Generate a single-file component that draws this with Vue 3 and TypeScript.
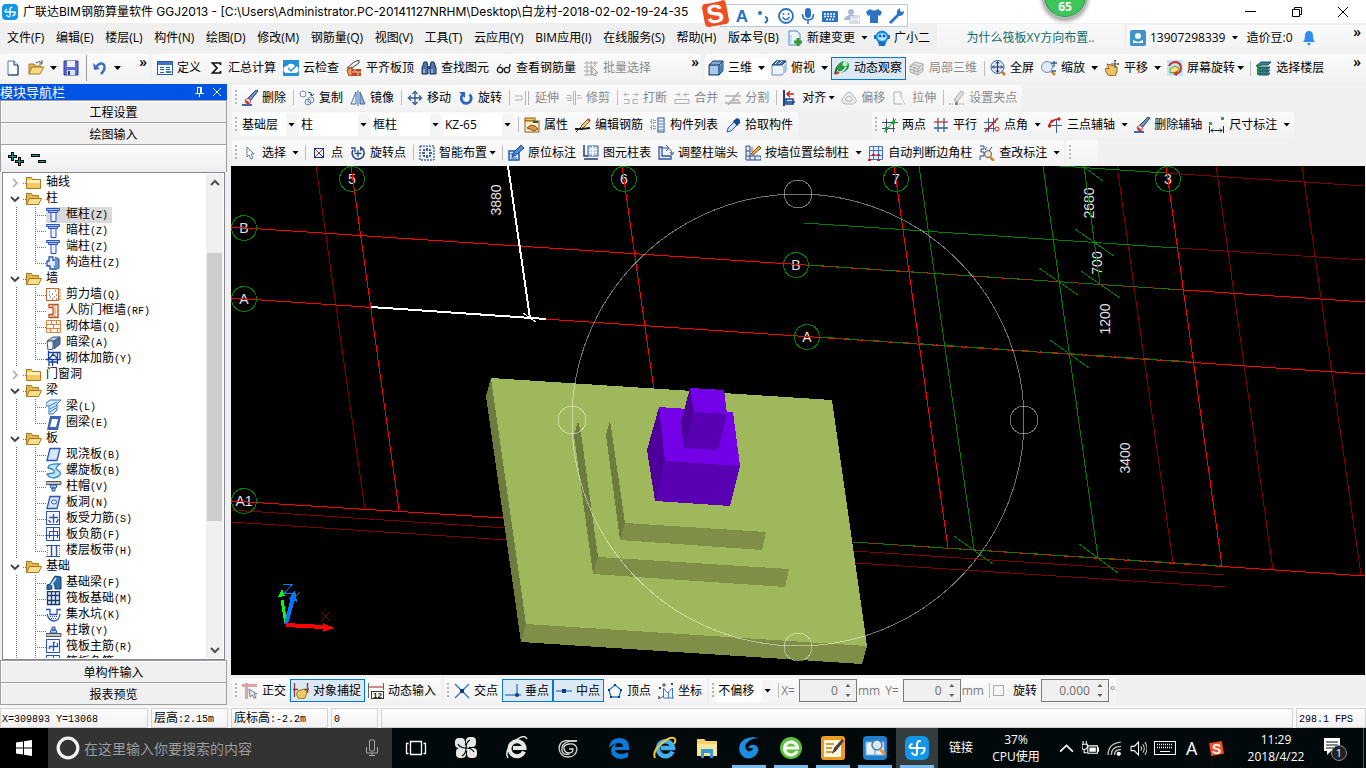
<script setup lang="ts">
import { ref } from 'vue'

interface Tool {
  icon?: string
  label?: string
  arrow?: 'split' | 'menu'
  off?: boolean
  on?: boolean
  sep?: boolean
}

const sep: Tool = { sep: true }

const icons: Record<string, string> = {
  app: '<rect width="16" height="16" rx="4" fill="#1296ea"/><path d="M8 12.500V5q.5-2 2.500-1.500M8 12.500q-2 1-3.500-1.500M3 8h10q.5 3-2.500 4M3 8q0-2 2-3" fill="none" stroke="#fff" stroke-width="1.300"/>',
  newfile: '<path d="M3 1h6l4 4v10H3z" fill="#fdfdff" stroke="#5b7aa5"/><path d="M9 1v4h4" fill="#dfe8f5" stroke="#223a60"/><path d="M13 5v10H3" fill="none" stroke="#223a60"/>',
  open: '<path d="M1 14V4h5l1 2h6v3" fill="#e3b553" stroke="#a87a24"/><path d="M1 14l3-7h12l-4 7z" fill="#f8d984" stroke="#a87a24"/><path d="M8 3q3-3 6 0M14 0v4h-3" fill="none" stroke="#555"/>',
  save: '<path d="M1 1h14v14H1z" fill="#5b6bd0" stroke="#263a94"/><rect x="4" y="1" width="8" height="6" fill="#eef0ff"/><rect x="4" y="10" width="8" height="5" fill="#dfe2f5"/><rect x="5" y="11" width="2" height="4" fill="#263a94"/>',
  undo: '<path d="M4 7q5-6 8-2 2 4-3 9" fill="none" stroke="#3c6fc4" stroke-width="2.500"/><path d="M1 3l1 7 6-1z" fill="#3c6fc4"/>',
  define: '<rect x=".5" y="1.500" width="15" height="13" fill="#f5f9ff" stroke="#2c5aa0"/><rect x="1" y="2" width="14" height="3" fill="#3f74c8"/><path d="M3 7.500h4M3 9.500h4M3 12.500h4M9 7.500h4M9 9.500h4" stroke="#2c5aa0"/><rect x="9" y="11" width="5" height="2" fill="#3f74c8"/>',
  sum: '<path d="M12.500 5V3H4.500l4.500 5-4.500 5h8v-2" fill="none" stroke="#111" stroke-width="1.700"/>',
  cloud: '<rect width="16" height="16" fill="#2590d8"/><path d="M4 13a3.500 3.500 0 0 1 0-7 4.500 4 0 0 1 8 0 3.500 3.500 0 0 1 0 7z" fill="#fff"/><path d="M5 8l3 3 5-5" fill="none" stroke="#2590d8" stroke-width="1.500"/>',
  slabtop: '<path d="M1 8l7-6 5-2v3l-7 5z" fill="#eee" stroke="#444"/><path d="M1 10l5-3v9H3z" fill="#f3a55b" stroke="#9a3a10"/><path d="M6 9h9v7H6z" fill="#b9462b"/><path d="M6 12h9M9 9v3M12 12v4" stroke="#f3c79d"/>',
  find: '<path d="M3 2h3l1 6v6H1V8zM10 2h3l2 6v6H9V8z" fill="#5273a8" stroke="#16305e"/><path d="M6 6h4v3H6z" fill="#2d4c80"/><path d="M3 9v4M11 9v4" stroke="#cfdcf2"/>',
  glasses: '<circle cx="4" cy="10" r="2.700" fill="none" stroke="#222" stroke-width="1.300"/><circle cx="11" cy="10" r="2.700" fill="none" stroke="#222" stroke-width="1.300"/><path d="M7 9h1M2 8l3-4M13 8l1-4v3" stroke="#222" fill="none"/>',
  batch: '<path d="M1 3h14M1 7h9M1 11h8M1 15h8M4 1v14M8 1v14M12 1v6" stroke="#aaa"/><path d="M9 7l6 6h-3l1 3-2 0-1-2-1 1z" fill="#eee" stroke="#999"/>',
  cube: '<path d="M1 5l4-4h10v10l-4 4H1z" fill="#7fa9d8" stroke="#143a66"/><path d="M1 5h10v10M11 5l4-4" fill="none" stroke="#143a66"/><path d="M2 6h8v8H2z" fill="#a9c9ea"/><path d="M12 6l3-3v8l-3 3z" fill="#4d7db3"/>',
  topview: '<path d="M1 5l4-4h10v10l-4 4H1z" fill="#eaf2fb" stroke="#6c8fb8"/><path d="M1 5l4-4h10l-4 4z" fill="#4d7db3" stroke="#143a66"/><path d="M12 6l3-3v8l-3 3z" fill="#a9c9ea"/><path d="M4 4l3-3M8 4l3-3" stroke="#cfe2f7"/>',
  orbit: '<path d="M1 14q1-8 8-12" stroke="#1b6e34" stroke-width="2" fill="none"/><ellipse cx="9" cy="7" rx="6.500" ry="5" fill="#2d9a48" transform="rotate(-35 9 7)"/><path d="M3 12q6 1 9-5" stroke="#e8efe8" stroke-width="1.500" fill="none"/><circle cx="11" cy="4" r="2.500" fill="#bdf0bd"/><path d="M1 15l5-2-3-2z" fill="#c0392b"/>',
  local3d: '<path d="M1 6l5-4 8 2v7l-5 4-8-3z" fill="#e3e3e3" stroke="#aaa"/><path d="M1 6l8 3 5-5M9 9v6M5 7v7M3 4l8 3M1 9l8 3 5-4" fill="none" stroke="#aaa"/>',
  full: '<circle cx="7.500" cy="7" r="6.500" fill="#dbe9fa" stroke="#3a5f94"/><path d="M7.500 2v10M2.500 7h10M6 3.500l1.500-2 1.500 2M6 10.500l1.500 2 1.500-2M4 5.500L2.500 7 4 8.500M11 5.500L12.500 7 11 8.500" fill="none" stroke="#16305e"/><path d="M12 12l3 3" stroke="#c07c2c" stroke-width="2.500"/>',
  zoom: '<circle cx="6" cy="7" r="5.500" fill="#dceafa" stroke="#6f8db5"/><path d="M10 11l4 4" stroke="#c88a3a" stroke-width="2.500"/><path d="M13 1v6M10 3h6M11 11h4" stroke="#2c5aa0" stroke-width="1.300" fill="none"/>',
  pan: '<path d="M4 15q-4-5-2-7l3 1-2-5 4 1 3 1 3 1v5l-2 4z" fill="#edc36a" stroke="#946015"/><path d="M11 0v8M7 4h8M10 1l1-1 1 1M14 3l1 1-1 1" stroke="#444" fill="none"/>',
  rotview: '<rect width="16" height="16" fill="#bfe6f8"/><path d="M2 6q2-4 7-4 5 1 5 6t-6 6" stroke="#d22f27" stroke-width="2" fill="none"/><path d="M3 9l5-3 4 2-2 4-7 1z" fill="#f7e27a" stroke="#5a9b37"/><path d="M6 14l4-3v5z" fill="#d22f27"/>',
  floors: '<path d="M0 6l5-4h10l-3 3H6zM3 7h11l-2 2H3zM3 10h11l-2 2H3zM3 13h11l-2 2H3z" fill="#3b7e9c" stroke="#155"/><path d="M2 4v11" stroke="#1c9140" stroke-width="2"/>',
  erase: '<path d="M0 15h10" stroke="#446a9c" stroke-width="2"/><path d="M5 9l9-9 2 1-8 10z" fill="#6e95c7" stroke="#24426b"/><path d="M3 10l3-2 3 3-2 3-3-1z" fill="#f6e3e3" stroke="#a4535e"/><path d="M4 11l3 3" stroke="#c33" stroke-width="2"/>',
  copy: '<circle cx="4" cy="4" r="3" fill="none" stroke="#6f89b0"/><circle cx="9" cy="12" r="3" fill="#dfe7f2" stroke="#6f89b0"/><circle cx="12" cy="10" r="3" fill="none" stroke="#6f89b0"/><path d="M9 2q4 0 4 4M11 4l2 2 2-2" fill="none" stroke="#2c4c80"/>',
  mirror: '<path d="M6 2v12H1z" fill="#eef4fc" stroke="#3e66a6"/><path d="M10 2v12h5z" fill="#8fb2e0" stroke="#3e66a6"/><path d="M8 0v16" stroke="#3e66a6"/>',
  move: '<path d="M8 3v10M3 8h10" stroke="#2f568e" stroke-width="1.300"/><path d="M5.500 4L8 1.500 10.500 4M5.500 12L8 14.500 10.500 12M4 5.500L1.500 8 4 10.500M12 5.500L14.500 8 12 10.500" fill="none" stroke="#2f568e" stroke-width="1.300"/>',
  rotate: '<path d="M4.500 5a5 5 0 1 0 7-.5" fill="none" stroke="#2f62c4" stroke-width="2.800"/><path d="M1 2h6v6z" fill="#2f62c4"/>',
  extend: '<path d="M0 6h7v4H0M10.500 1v14M13.500 1v14" fill="none" stroke="#b5b5b5"/>',
  trim: '<path d="M0 8h5M11 8h5M1 5.500h4v5H1M7.500 1v14M9.500 1v14M11 5.500h4" fill="none" stroke="#b5b5b5"/>',
  brk: '<path d="M1 9.500h5v4H1M15 9.500h-5v4h5M1 4.500h5M10 4.500h5M3 2.500l-2 2 2 2M13 2.500l2 2-2 2" fill="none" stroke="#b0b0b0"/>',
  merge: '<path d="M1 9.500h14v4H1zM1 4.500h5M10 4.500h5M4 2.500l2 2-2 2M12 2.500l-2 2 2 2" fill="none" stroke="#b0b0b0"/>',
  split: '<path d="M0 6h16M0 13h16M3 15L14 2M9 13v-3h4v3" fill="none" stroke="#b0b0b0" stroke-width="1.300"/>',
  align: '<path d="M2 0v16" stroke="#1b3f86" stroke-width="2"/><path d="M4 9h7v5H4zM5 12h8" fill="#dbe8fa" stroke="#1b3f86" stroke-width="1.500"/><path d="M12 4H6M8 1L5 4l3 3" stroke="#c8201c" stroke-width="1.500" fill="none"/>',
  offset: '<path d="M4 14q-5-2-2-6l4-5q2-2 4 0l4 5q3 4-2 6z" fill="#eee" stroke="#b5b5b5"/><path d="M5 11q-1-2 1-4 2-2 4 0 2 2 1 4z" fill="none" stroke="#b5b5b5"/>',
  stretch: '<path d="M9 2H2v12h7M9 2v5" fill="none" stroke="#b0b0b0"/><path d="M8 5l5 9H9" stroke="#bbb" fill="none" stroke-dasharray="2 1"/>',
  grips: '<path d="M0 14h4M10 14h6" stroke="#999" stroke-dasharray="2 1"/><rect x="6" y="12" width="3" height="3" fill="#888"/><path d="M5 10l7-9 3 2-7 9z" fill="#ddd" stroke="#aaa"/>',
  prop: '<rect x="1" y="1" width="10" height="3" fill="#f1c66a" stroke="#8c6117"/><rect x="1" y="4" width="14" height="11" fill="#fbeec8" stroke="#8c6117"/><path d="M3 11l4-3 4 1 3 3-4 2-4-2z" fill="#e09a35" stroke="#744"/><path d="M9 5h5" stroke="#355" stroke-width="2"/>',
  editbar: '<path d="M0 12h6l9-1" stroke="#222" stroke-width="1.800" fill="none"/><path d="M6 9L13 2l2 2-7 7z" fill="#f0cf74" stroke="#7c5a1c"/><path d="M13 2l2 2" stroke="#c33" stroke-width="2"/><path d="M1 15l5-5" stroke="#222"/>',
  complist: '<rect x="8" y="1" width="6" height="14" fill="#fff" stroke="#1f4a8f"/><path d="M9 4h4M9 7h4M9 10h4M9 13h4" stroke="#3f74c8"/><path d="M1 3h4v3H1zM1 9h4v3H1z" fill="none" stroke="#1f4a8f" stroke-dasharray="1 1"/>',
  pick: '<path d="M2 15l1-4 6-6 3 3-6 6z" fill="#cfe5fb" stroke="#2c5aa0"/><path d="M8 4l4 5 3-3q1-4-3-5z" fill="#174a93"/>',
  twopt: '<path d="M0 5.500h16M0 11.500h13M4.500 2v14M11.500 1v14" stroke="#3a4f5f"/><path d="M2 15L14 2" stroke="#1c8c3c"/><rect x="3" y="10" width="3" height="3" fill="#1a3"/><rect x="10" y="4" width="3" height="3" fill="#1a3"/>',
  parallel: '<path d="M5 1v14M11 1v14M1 11h14" stroke="#3a5f94" stroke-width="1.300"/><path d="M1 5h14" stroke="#c0392b" stroke-width="1.300"/>',
  ptangle: '<path d="M0 5.500h12M0 11.500h12M4.500 1v14M9.500 1v14" stroke="#3a5f94"/><path d="M1 15L14 1" stroke="#c8201c" stroke-width="1.500"/><circle cx="13" cy="12" r="2" fill="#fff" stroke="#c8201c"/>',
  arc3: '<path d="M2 9q1-6 10-7" stroke="#c8201c" stroke-width="1.500" fill="none"/><path d="M2 8.500h13M9.500 3v13" stroke="#3a5f94"/><circle cx="2.500" cy="9" r="1.700" fill="#c8201c"/><circle cx="12" cy="2" r="1.700" fill="#c8201c"/><circle cx="5" cy="4" r="1.500" fill="#c8201c"/>',
  dim: '<path d="M.5 9v7M14.500 9v7M2 13.500h11M4 11.500l-2 2 2 2M11 11.500l2 2-2 2" fill="none" stroke="#222"/><rect x="0" y="5" width="3" height="3" fill="#39a04a"/><rect x="12" y="0" width="3" height="3" fill="#39a04a"/>',
  cursor: '<path d="M5 2v10l2-2 2 4 2-1-2-4h3z" fill="#fff" stroke="#6a7890"/>',
  point: '<rect x="3.500" y="3.500" width="9" height="9" fill="#eef3fb" stroke="#1b2f7a"/><path d="M4 4l8 8M12 4l-8 8" stroke="#a33"/><path d="M8 8l4 4" stroke="#1b2f7a"/>',
  rotpoint: '<path d="M3 5a6 6 0 1 0 9-1.500" fill="none" stroke="#2b4a80" stroke-width="1.600"/><path d="M8 5v7M4.500 8.500h7M1 3h4v4" stroke="#2b4a80" stroke-width="1.300" fill="none"/><path d="M10 1v5l4-2z" fill="#2b4a80"/>',
  smart: '<rect x="1" y="1" width="14" height="14" fill="#e9f1fb" stroke="#16305e" stroke-dasharray="2 1"/><path d="M8 3v3M8 10v3M3 8h3M10 8h3M5 6V5h1M10 5h1v1M5 10v1h1M11 10v1h-1" stroke="#16305e" stroke-width="1.500" fill="none"/>',
  insitu: '<path d="M1 6h10v9H1z" fill="#dbe8fa" stroke="#1b5aa8" stroke-width="1.500"/><path d="M4 12l1-4 8-8 3 3-8 7z" fill="#4d8fd8" stroke="#174a93"/><path d="M2 9h5M3 13h6" stroke="#1b5aa8"/>',
  coltable: '<rect x="5" y="1" width="10" height="10" fill="#c6d8f2" stroke="#3e5f94"/><path d="M6 4.500h8M6 7.500h8M9.500 1v10" stroke="#fff"/><path d="M1 0v11h4M1 14h14" stroke="#1f3f86" stroke-width="1.500" fill="none"/>',
  colend: '<path d="M1 2h3v9h9v3H1z" fill="#e3edf9" stroke="#34569a" stroke-width="1.300"/><path d="M4 3h5q5 1 5 6M8 0l3 3-3 3M12 7l2 3 2-3" fill="none" stroke="#34569a"/>',
  bywall: '<path d="M1 1h4v14H1zM1 6h4M1 11h4M5 11h11v4H5M10 11v4" fill="#dfe9f7" stroke="#2d4d84"/><path d="M6 9L14 1l2 2-8 7z" fill="#eab54a" stroke="#6b4c16"/><path d="M7 2v5" stroke="#c33"/>',
  autocol: '<path d="M1.500 1.500h13v13h-13zM1 5.500h14M1 10.500h14M5.500 1v14M10.500 1v14" fill="#e6effb" stroke="#3f74c8"/><path d="M0 14h3v2H0zM9 14h3v2H9zM9 9h3v2H9zM4 9h3v2H4z" fill="#d22"/>',
  check: '<path d="M1 1h4v3H2v3h3v4H1v4M8 2L6 5M13 2l-4 5" fill="none" stroke="#1f4a8f"/><circle cx="9" cy="9" r="3.500" fill="#f3ead2" stroke="#555"/><path d="M11 12l4 4" stroke="#c88a3a" stroke-width="2.500"/>',
  ortho: '<path d="M0 2.500h15M4.500 0v16" stroke="#dca4a4" stroke-width="3"/><path d="M7 6l8 5-3 0 2 4-2 0-2-3-2 2z" fill="#dfe6ee" stroke="#72808f"/>',
  snap: '<path d="M1.500 0v14M14.500 0v10M0 6.500h5M11 6.500h5" stroke="#863b3b" stroke-width="1.300"/><path d="M5 15q-3-4 0-7l6-2 3 3-2 6-5 1z" fill="#f0cb63" stroke="#9a7320"/>',
  dynin: '<path d="M0 4h16" stroke="#c98b8b" stroke-width="2"/><path d="M.5 0v15M15.500 0v7" stroke="#666"/><rect x="3.500" y="8.500" width="12" height="7" fill="#fff" stroke="#333"/><text x="5" y="15" font-size="8" font-weight="700" font-family="Liberation Sans" fill="#111">12</text>',
  cross: '<path d="M1 1l14 14M15 1L1 15" stroke="#2a78c8" stroke-width="1.400"/><rect x="6" y="6" width="4" height="4" fill="#0d3c86"/>',
  perp: '<path d="M0 12h16M12 1v11" stroke="#4a86c8" stroke-width="1.500"/><circle cx="12" cy="12" r="2" fill="#0d3c86"/>',
  mid: '<path d="M0 8h16" stroke="#4a86c8" stroke-width="1.500"/><rect x="6" y="6" width="4" height="4" fill="#0d3c86"/>',
  vertex: '<path d="M8 2l6 5-2 7H4L2 7z" fill="none" stroke="#2a78c8" stroke-width="1.300"/><path d="M7 1h2v2H7zM1 6h2v2H1zM13 6h2v2h-2zM3 13h2v2H3zM11 13h2v2h-2z" fill="#0d3c86"/>',
  coord: '<path d="M5.500 5v10H16M5.500 5l4 5 5-5M10.500 9v6M14.500 5v10M3 15l3-3" fill="none" stroke="#3f74c8"/><path d="M1 4l2 2M3 4l-2 2M13 0l2 2M15 0l-2 2M5 1h2v2H5zM0 14h2v2H0z" stroke="#444" fill="none"/>',
  newchange: '<path d="M2 1h8l3 3v11H2z" fill="#eef7ff" stroke="#3b8fc0"/><path d="M4 5v8" stroke="#9bc6e3"/><path d="M11 8v8M7 12h8" stroke="#2f9a2f" stroke-width="3"/>',
  mascot: '<circle cx="8" cy="7" r="6.500" fill="#2288d8"/><ellipse cx="8" cy="7" rx="5" ry="4" fill="#7fd0ff"/><circle cx="6" cy="6" r="1" fill="#124"/><circle cx="10" cy="6" r="1" fill="#124"/><path d="M5 8q3 3 6 0" stroke="#fff" fill="none"/><path d="M4 12h8l-1 4H5z" fill="#1b6fc0"/><path d="M0 5h2v4H0zM14 5h2v4h-2z" fill="#1b6fc0"/>',
  user: '<rect width="16" height="16" rx="2" fill="#3f93cc"/><circle cx="8" cy="6" r="3" fill="#fff"/><path d="M3 13v-3l5 2 5-2v3z" fill="#fff"/>',
  bell: '<path d="M2 12q2-2 2-6 0-5 4-5t4 5q0 4 2 6z" fill="#2f8ef0"/><path d="M6 13h4l-2 3z" fill="#2f8ef0"/>',
  folder: '<path d="M.5 13.500v-11h5l1 2h8v9z" fill="#f3c95f" stroke="#a9781d"/><path d="M1 5h13v3H1z" fill="#fdf0bf"/>',
  folderopen: '<path d="M.5 13.500v-11h5l1 2h6v3" fill="#e5b64b" stroke="#a9781d"/><path d="M.5 13.500l3-6h12l-3 6z" fill="#fbdf8f" stroke="#a9781d"/>',
  column: '<path d="M.5 1.500h13v2H.5zM2.500 3.500h9v2h-9z" fill="#a9c6f2" stroke="#2853c4"/><path d="M5 5.500h5v9H5z" fill="#e9f2fd" stroke="#2853c4"/>',
  tiecol: '<path d="M3 2h4v3h3v2h2v4H9v3H4v-3H1V6h2z" fill="#dce8fb" stroke="#2853a8" stroke-width="1.300"/><path d="M9 2l4 2v9l-4 2" fill="#6d94cf" stroke="#2853a8"/>',
  shear: '<rect x=".5" y="1.500" width="12" height="12" fill="#fff" stroke="#c8622a"/><path d="M3 5h1M6 7h1M9 4h1M4 10h1M8 10h1M10 8h1M6 12h1M10 12h1M3 8h1" stroke="#333"/><path d="M14 2v12" stroke="#c8622a" stroke-dasharray="2 1"/>',
  airwall: '<path d="M3 1.500h9v13H3v-3h4v-7H3z" fill="#fff0e2" stroke="#b8501a" stroke-width="1.300"/><path d="M9 5v6M5 3h5M5 13h5" stroke="#d88447"/>',
  brick: '<path d="M.5 1.500h14v12H.5zM1 5.500h13M1 9.500h13M5.500 2v3M10.500 2v3M7.500 6v3M4.500 10v3M11.500 10v3" fill="#fff5ea" stroke="#d88447"/>',
  beam: '<path d="M1 6l6-4h7l-6 4z" fill="#c3d3e8" stroke="#39506f"/><path d="M1 6h6v8l-5 1z" fill="#eef3fa" stroke="#39506f"/><path d="M8 6l6-4v7l-6 5z" fill="#4f74a5" stroke="#39506f"/>',
  wallbar: '<path d="M2 1.500h12v6M0 8.500h15M2.500 0v10M6.500 8v7M11.500 1v12M3 15v-4h8M3 8l4-5 5 5" fill="none" stroke="#153f9c" stroke-width="1.300"/>',
  beaml: '<path d="M0 4l4-3h11l-4 4v6l-4 4H3V7H0z" fill="#d8ebfa" stroke="#2f77b8"/><path d="M3 7l8-4M4 10l7-4M4 13l6-4" stroke="#2f77b8"/>',
  ring: '<path d="M4 1h11l-3 14H1z" fill="#3a62bd"/><path d="M6 4h6l-2 8H4z" fill="#fff"/>',
  slab: '<path d="M4 1.500h10l-3 12H1z" fill="#d7e6fb" stroke="#2853c4" stroke-width="1.300"/>',
  spiral: '<path d="M14 1q-12-1-12 4 8 2 6 5l-7 1q2 4 7 4 8-2 6-6-2-2-4-3 0-2 4-5z" fill="#bfe3f7" stroke="#2f86c0" stroke-width="1.300"/>',
  cap: '<path d="M0 2.500h15v3H0z" fill="#c4c4c4" stroke="#555"/><path d="M4 6h7l-1 3H5zM6 9h3v3H6z" fill="#b6d0f4" stroke="#2853a8"/>',
  hole: '<path d="M4 1.500h10l-3 12H1z" fill="#d7e6fb" stroke="#2853c4" stroke-width="1.300"/><ellipse cx="8" cy="7" rx="2.500" ry="2" fill="#fff" stroke="#2853c4"/>',
  barS: '<rect x=".5" y=".5" width="13" height="13" fill="#f3f8ff" stroke="#2853c4"/><path d="M3 6.500h9M7.500 3v9M5 11q-2 0-2-2M10 11q2 0 2-3" fill="none" stroke="#2853a8" stroke-width="1.300"/>',
  barF: '<rect x=".5" y=".5" width="13" height="13" fill="#f3f8ff" stroke="#2853c4"/><path d="M3.500 4v7M11.500 4v7M3 4.500h9M1 8.500h13M7.500 1v13" fill="none" stroke="#2853a8"/>',
  strip: '<path d="M0 2.500h14M0 13.500h14" stroke="#2853a8"/><path d="M5.500 3v10M10.500 3v10" stroke="#2853a8" stroke-width="1.500"/><path d="M1.500 3v10M13.500 3v10" stroke="#888" stroke-dasharray="1 1"/>',
  fbeam: '<path d="M1 14.500V10l3-1 5-8 6 1v12H9v-4H6v4z" fill="#2e6da8" stroke="#123c6b"/><path d="M5 10l5-7M7 13V9" stroke="#d7e9f8" stroke-width="1.500"/>',
  raft: '<path d="M1.500 .5h12v13h-12zM1 4.500h13M1 9.500h13M5.500 1v13M9.500 1v13" fill="#e3eefa" stroke="#173e74" stroke-width="1.300"/>',
  pit: '<path d="M0 2.500h4v5h7v-5h4M1 7q2 7 7 7t6-7" fill="none" stroke="#2853c4" stroke-width="1.300"/><path d="M4 9.500h8M5 11.500h6" stroke="#2853c4" stroke-dasharray="1 1"/>',
  pier: '<path d="M0 10.500h15v3H0z" fill="#c4c4c4" stroke="#555"/><path d="M4 10h7l-1-3H5zM6 7h3V4H6z" fill="#b6d0f4" stroke="#2853a8"/>',
  barR: '<rect x=".5" y=".5" width="13" height="13" fill="#f3f8ff" stroke="#2853c4"/><path d="M3 7.500h9M7.500 3v9M3.500 7v3M11.500 4v4M7 3.500h2" fill="none" stroke="#2853c4" stroke-width="1.300"/>',
}

const menus = ['文件(F)', '编辑(E)', '楼层(L)', '构件(N)', '绘图(D)', '修改(M)', '钢筋量(Q)', '视图(V)', '工具(T)', '云应用(Y)', 'BIM应用(I)', '在线服务(S)', '帮助(H)', '版本号(B)']

const fileTools: Tool[] = [{ icon: 'newfile' }, { icon: 'open', arrow: 'split' }, { icon: 'save' }, sep, { icon: 'undo', arrow: 'split' }]
const calcTools: Tool[] = [
  { icon: 'define', label: '定义' }, { icon: 'sum', label: '汇总计算' }, { icon: 'cloud', label: '云检查' },
  { icon: 'slabtop', label: '平齐板顶' }, { icon: 'find', label: '查找图元' }, { icon: 'glasses', label: '查看钢筋量' },
  { icon: 'batch', label: '批量选择', off: true },
]
const viewTools: Tool[] = [
  { icon: 'cube', label: '三维', arrow: 'split' }, { icon: 'topview', label: '俯视', arrow: 'split' },
  { icon: 'orbit', label: '动态观察', on: true }, { icon: 'local3d', label: '局部三维', off: true }, sep,
  { icon: 'full', label: '全屏' }, { icon: 'zoom', label: '缩放', arrow: 'split' }, { icon: 'pan', label: '平移', arrow: 'split' },
  { icon: 'rotview', label: '屏幕旋转', arrow: 'menu' }, sep, { icon: 'floors', label: '选择楼层' },
]
const editTools: Tool[] = [
  { icon: 'erase', label: '删除' }, sep, { icon: 'copy', label: '复制' }, { icon: 'mirror', label: '镜像' }, sep,
  { icon: 'move', label: '移动' }, { icon: 'rotate', label: '旋转' }, sep,
  { icon: 'extend', label: '延伸', off: true }, { icon: 'trim', label: '修剪', off: true }, sep,
  { icon: 'brk', label: '打断', off: true }, { icon: 'merge', label: '合并', off: true }, { icon: 'split', label: '分割', off: true }, sep,
  { icon: 'align', label: '对齐', arrow: 'menu' }, { icon: 'offset', label: '偏移', off: true }, { icon: 'stretch', label: '拉伸', off: true }, sep,
  { icon: 'grips', label: '设置夹点', off: true },
]
const compTools: Tool[] = [
  sep, { icon: 'prop', label: '属性' }, { icon: 'editbar', label: '编辑钢筋' },
  { icon: 'complist', label: '构件列表' }, { icon: 'pick', label: '拾取构件' },
]
const axisTools: Tool[] = [
  { icon: 'twopt', label: '两点' }, { icon: 'parallel', label: '平行' }, { icon: 'ptangle', label: '点角', arrow: 'split' },
  { icon: 'arc3', label: '三点辅轴', arrow: 'split' }, { icon: 'erase', label: '删除辅轴' }, { icon: 'dim', label: '尺寸标注', arrow: 'split' },
]
const drawTools: Tool[] = [
  { icon: 'cursor', label: '选择', arrow: 'split' }, sep, { icon: 'point', label: '点' }, { icon: 'rotpoint', label: '旋转点' }, sep,
  { icon: 'smart', label: '智能布置', arrow: 'menu' }, sep, { icon: 'insitu', label: '原位标注' }, { icon: 'coltable', label: '图元柱表' },
  { icon: 'colend', label: '调整柱端头' }, { icon: 'bywall', label: '按墙位置绘制柱', arrow: 'split' },
  { icon: 'autocol', label: '自动判断边角柱' }, { icon: 'check', label: '查改标注', arrow: 'split' },
]
const modeTools: Tool[] = [{ icon: 'ortho', label: '正交' }, { icon: 'snap', label: '对象捕捉', on: true }, { icon: 'dynin', label: '动态输入' }]
const snapTools: Tool[] = [
  { icon: 'cross', label: '交点' }, { icon: 'perp', label: '垂点', on: true }, { icon: 'mid', label: '中点', on: true },
  { icon: 'vertex', label: '顶点' }, { icon: 'coord', label: '坐标' },
]

const combos = [
  { value: '基础层', name: '楼层', short: true }, { value: '柱', name: '构件类型', short: false },
  { value: '框柱', name: '构件子类', short: false }, { value: 'KZ-65', name: '构件名称', short: false },
]

interface Node { icon: string; label: string; key?: string; kind: 'closed' | 'open' | 'item'; last?: boolean; sel?: boolean }
const item = (icon: string, label: string, key: string, extra: Partial<Node> = {}): Node => ({ icon, label, key, kind: 'item', ...extra })
const open = (label: string): Node => ({ icon: 'folderopen', label, kind: 'open' })
const closed = (label: string): Node => ({ icon: 'folder', label, kind: 'closed' })
const tree: Node[] = [
  closed('轴线'), open('柱'),
  item('column', '框柱', '(Z)', { sel: true }), item('column', '暗柱', '(Z)'), item('column', '端柱', '(Z)'), item('tiecol', '构造柱', '(Z)', { last: true }),
  open('墙'), item('shear', '剪力墙', '(Q)'), item('airwall', '人防门框墙', '(RF)'), item('brick', '砌体墙', '(Q)'), item('beam', '暗梁', '(A)'), item('wallbar', '砌体加筋', '(Y)', { last: true }),
  closed('门窗洞'), open('梁'), item('beaml', '梁', '(L)'), item('ring', '圈梁', '(E)', { last: true }),
  open('板'), item('slab', '现浇板', '(B)'), item('spiral', '螺旋板', '(B)'), item('cap', '柱帽', '(V)'), item('hole', '板洞', '(N)'),
  item('barS', '板受力筋', '(S)'), item('barF', '板负筋', '(F)'), item('strip', '楼层板带', '(H)', { last: true }),
  open('基础'), item('fbeam', '基础梁', '(F)'), item('raft', '筏板基础', '(M)'), item('pit', '集水坑', '(K)'), item('pier', '柱墩', '(Y)'),
  item('barR', '筏板主筋', '(R)'), item('barF', '筏板负筋', '(X)'),
]

type Line = [number, number, number, number]
const dark: Line[] = [
  [316, 166, 365, 510], [1117, 166, 1173, 563], [1216, 166, 1273, 570], [1302, 166, 1361, 575],
  [231, 510, 506, 528], [231, 522, 507, 540], [853, 551, 1224, 575], [855, 563, 1226, 587],
  [1177, 248, 1365, 260], [1165, 173, 1365, 186],
]
const red: Line[] = [
  [351, 166, 399, 510], [622, 166, 654, 390], [894, 166, 948, 548], [1166, 166, 1222, 566],
  [231, 227, 1365, 302], [231, 298, 1365, 374], [231, 501, 504, 518], [853, 542, 1365, 576],
]
const green: Line[] = [
  [919, 166, 974, 550], [1043, 166, 1098, 558], [1084, 166, 1100, 284], [804, 223, 1177, 248], [1060, 166, 1165, 173],
  [1079, 163, 1103, 181], [1075, 229, 1114, 256], [1039, 268, 1078, 295], [1081, 271, 1120, 298],
  [1050, 340, 1089, 368], [1079, 544, 1118, 573], [954, 536, 993, 564],
]
const mixed: Line[] = [[809, 265, 1183, 290], [819, 337, 1194, 362], [853, 542, 1222, 566]]
const bubbles = [
  { x: 352, y: 179, t: '5' }, { x: 624, y: 179, t: '6' }, { x: 896, y: 179, t: '7' }, { x: 1168, y: 179, t: '3' },
  { x: 244, y: 228, t: 'B' }, { x: 244, y: 299, t: 'A' }, { x: 244, y: 501, t: 'A1' }, { x: 796, y: 265, t: 'B' }, { x: 807, y: 337, t: 'A' },
]
const dims = [
  { x: 496, y: 200, t: '3880' }, { x: 1089, y: 203, t: '2680' }, { x: 1097, y: 263, t: '700' },
  { x: 1105, y: 319, t: '1200' }, { x: 1125, y: 458, t: '3400' },
]
const handles = [[798, 194], [572, 420], [1024, 420], [798, 647]]
const faces = [
  { c: '#a0b85c', p: '491,378 832,400 867,646 526,624' },
  { c: '#6c7b3e', p: '491,378 486,396 521,642 526,624' },
  { c: '#7f8f47', p: '526,624 867,646 862,664 521,642' },
  { c: '#6c7b3e', p: '578,421 574,435 593,574 598,557 581,433' },
  { c: '#7f8f47', p: '598,557 789,569 785,587 593,574' },
  { c: '#6c7b3e', p: '610,420 606,435 620,540 625,523' },
  { c: '#7f8f47', p: '625,523 766,532 762,550 620,540' },
  { c: '#7300e6', p: '659,407 733,412 740,466 665,461' },
  { c: '#4c0099', p: '659,407 647,450 655,501 665,461' },
  { c: '#5a00b3', p: '665,461 740,466 730,506 655,501' },
  { c: '#7300e6', p: '690,388 724,390 727,414 694,412' },
  { c: '#4c0099', p: '690,388 681,422 684,448 694,412' },
  { c: '#5a00b3', p: '694,412 727,414 718,450 684,448' },
]

const offX = ref('0')
const offY = ref('0')
const angle = ref('0.000')
const rotated = ref(false)
</script>

<template>
  <div class="desk">
    <header class="title">
      <svg class="logo" viewBox="0 0 16 16" v-html="icons.app" />
      <h1>广联达BIM钢筋算量软件 GGJ2013 - [C:\Users\Administrator.PC-20141127NRHM\Desktop\白龙村-2018-02-02-19-24-35</h1>
      <div class="winbtns">
        <button aria-label="最小化"><svg viewBox="0 0 12 12"><path d="M0 5.500h11" stroke="#000" /></svg></button>
        <button aria-label="还原"><svg viewBox="0 0 12 12"><path d="M1.500 3.500h7v7h-7zM3.500 3v-1.500h7v7H9" fill="none" stroke="#000" /></svg></button>
        <button aria-label="关闭"><svg viewBox="0 0 12 12"><path d="M1 1l10 10M11 1L1 11" stroke="#000" /></svg></button>
      </div>
      <div class="ball">65</div>
      <div class="ime">
        <svg class="sogou" viewBox="0 0 28 28"><path d="M3 4Q14 3 22 0q2 0 3 4l3 16q0 3-3 4L8 27q-3 0-4-3L1 8q0-3 2-4z" fill="#f04e23" /><text x="14" y="23" text-anchor="middle" font-size="26" font-weight="700" font-family="Liberation Sans" fill="#fff" transform="rotate(-8 14 14)">S</text></svg>
        <svg viewBox="0 0 16 16"><text x="8" y="14" text-anchor="middle" font-size="17" font-weight="700" font-family="Liberation Sans" fill="#2a72c4">A</text></svg>
        <svg viewBox="0 0 16 16"><circle cx="4" cy="5" r="2" fill="#2a72c4" /><path d="M9 9q3 0 2 4l-2 2" stroke="#2a72c4" stroke-width="2" fill="none" /></svg>
        <svg viewBox="0 0 16 16"><circle cx="8" cy="8" r="7" fill="none" stroke="#2a72c4" stroke-width="1.800" /><path d="M4.500 9q3.500 5 7 0" fill="none" stroke="#2a72c4" stroke-width="1.500" /><circle cx="5.500" cy="6" r="1" fill="#2a72c4" /><circle cx="10.500" cy="6" r="1" fill="#2a72c4" /></svg>
        <svg viewBox="0 0 16 16"><rect x="5" y="0" width="6" height="10" rx="3" fill="#2a72c4" /><path d="M2.500 6q0 6 5.500 6t5.500-6M8 12v4" fill="none" stroke="#2a72c4" stroke-width="1.600" /></svg>
        <svg viewBox="0 0 16 16"><rect x="0" y="3" width="16" height="11" rx="1" fill="#2a72c4" /><path d="M2 6h12M2 8.500h12M4 11.500h8" stroke="#fff" stroke-width="1.300" stroke-dasharray="2 1" /></svg>
        <svg viewBox="0 0 16 16"><circle cx="7" cy="4" r="3" fill="#a9bbd2" /><path d="M0 12q1-5 7-5t6 3v2z" fill="#a9bbd2" /><rect x="6" y="8" width="10" height="7" fill="#fff" stroke="#a9bbd2" /><path d="M8 10h6M8 13h6" stroke="#a9bbd2" /></svg>
        <svg viewBox="0 0 16 16"><path d="M4 1q4 3 8 0l4 3-2 4-2-1v8H4V7L2 8 0 4z" fill="#2a72c4" /></svg>
        <svg viewBox="0 0 16 16"><path d="M1 14l8-8q-1-4 3-6l0 3 2 1 2-1q0 5-5 5l-8 8z" fill="#2a72c4" /></svg>
      </div>
    </header>

    <div class="menurow">
      <nav class="menus"><button v-for="m in menus" :key="m">{{ m }}</button></nav>
      <div class="strip plain">
        <button class="tool"><svg viewBox="0 0 16 16" v-html="icons.newchange" /><span>新建变更</span><i class="arr split" /></button>
        <button class="tool"><svg viewBox="0 0 16 16" v-html="icons.mascot" /><span>广小二</span></button>
      </div>
      <a class="tip" href="#">为什么筏板XY方向布置..</a>
      <div class="strip account">
        <button class="tool"><svg viewBox="0 0 16 16" v-html="icons.user" /><span>13907298339</span><i class="arr split" /></button>
        <span class="beans">造价豆:0</span>
        <svg class="bell" viewBox="0 0 16 16" v-html="icons.bell" />
        <i class="more">»</i>
      </div>
    </div>

    <div class="toprow">
      <div class="strip files">
        <template v-for="(t, i) in fileTools" :key="i">
          <i v-if="t.sep" class="sep tall" />
          <button v-else class="tool" :aria-label="t.icon"><svg viewBox="0 0 16 16" v-html="icons[t.icon!]" /><i v-if="t.arrow" class="arr split" /></button>
        </template>
        <i class="more">»</i>
      </div>
      <div class="strip calc">
        <button v-for="t in calcTools" :key="t.label" class="tool" :class="{ off: t.off }"><svg viewBox="0 0 16 16" v-html="icons[t.icon!]" /><span>{{ t.label }}</span></button>
        <i class="more">»</i>
      </div>
      <div class="strip view">
        <template v-for="(t, i) in viewTools" :key="i">
          <i v-if="t.sep" class="sep" />
          <button v-else class="tool" :class="{ off: t.off, on: t.on, white: i === 0 }"><svg viewBox="0 0 16 16" v-html="icons[t.icon!]" /><span>{{ t.label }}</span><i v-if="t.arrow" class="arr" :class="t.arrow" /></button>
        </template>
        <i class="more">»</i>
      </div>
    </div>

    <main class="work">
      <aside class="nav">
        <div class="navhead">
          <h2>模块导航栏</h2>
          <svg viewBox="0 0 12 12"><path d="M4.500 1v6M8.500 1v6M4 1.500h5M2 7.500h9M6.500 7v4M7.500 1v6" stroke="#fff" fill="none" /></svg>
          <svg viewBox="0 0 12 12"><path d="M2 2l8 8M10 2l-8 8" stroke="#fff" /></svg>
        </div>
        <button class="section">工程设置</button>
        <button class="section">绘图输入</button>
        <div class="expanders">
          <svg viewBox="0 0 42 18"><path d="M8.500 3v9M4 7.500h9M15.500 8v9M11 12.500h9M27 6.500h9M34 12.500h9" stroke="#000" stroke-width="3" /><path d="M8.500 4v7M5 7.500h7M15.500 9v7M12 12.500h7M28 6.500h7M35 12.500h6" stroke="#00a0a0" /></svg>
        </div>
        <div class="treebox">
          <ul class="tree">
            <li v-for="(n, i) in tree" :key="i">
              <svg v-if="n.kind === 'item'" class="guide deep" viewBox="0 0 42 16"><path :d="'M12.500 0v16M31.500 0v' + (n.last ? 8 : 16) + 'M31 8.500h11'" stroke="#777" stroke-dasharray="1 1" fill="none" /></svg>
              <svg v-else class="guide" viewBox="0 0 22 16">
                <path v-if="n.kind === 'closed'" d="M9 4l4 4-4 4" stroke="#a6a6a6" stroke-width="1.500" fill="none" />
                <path v-else d="M7 6l4 4 4-4" stroke="#404040" stroke-width="1.800" fill="none" />
                <path d="M19 8.500h3" stroke="#777" stroke-dasharray="1 1" />
              </svg>
              <span class="leaf" :class="{ sel: n.sel }"><svg class="nodeicon" viewBox="0 0 16 16" v-html="icons[n.icon]" /><span class="name">{{ n.label }}<span class="mono">{{ n.key }}</span></span></span>
            </li>
          </ul>
          <div class="scroll">
            <button aria-label="向上"><svg viewBox="0 0 10 10"><path d="M1 7l4-4 4 4" stroke="#505050" stroke-width="2" fill="none" /></svg></button>
            <div class="track"><div class="thumb" /></div>
            <button aria-label="向下"><svg viewBox="0 0 10 10"><path d="M1 3l4 4 4-4" stroke="#505050" stroke-width="2" fill="none" /></svg></button>
          </div>
        </div>
        <button class="section">单构件输入</button>
        <button class="section">报表预览</button>
      </aside>

      <section class="stage">
        <div class="bar">
          <div class="strip">
            <i class="grip" />
            <template v-for="(t, i) in editTools" :key="i">
              <i v-if="t.sep" class="sep" />
              <button v-else class="tool" :class="{ off: t.off }"><svg viewBox="0 0 16 16" v-html="icons[t.icon!]" /><span>{{ t.label }}</span><i v-if="t.arrow" class="arr" :class="t.arrow" /></button>
            </template>
          </div>
        </div>
        <div class="bar">
          <div class="strip">
            <i class="grip" />
            <div class="combos">
              <label v-for="c in combos" :key="c.name" class="combo" :class="{ short: c.short }">
                <select :aria-label="c.name"><option>{{ c.value }}</option></select><span class="drop"><i class="arr" /></span>
              </label>
            </div>
            <template v-for="(t, i) in compTools" :key="i">
              <i v-if="t.sep" class="sep" />
              <button v-else class="tool"><svg viewBox="0 0 16 16" v-html="icons[t.icon!]" /><span>{{ t.label }}</span></button>
            </template>
          </div>
          <div class="strip apart">
            <i class="grip" />
            <button v-for="t in axisTools" :key="t.label" class="tool"><svg viewBox="0 0 16 16" v-html="icons[t.icon!]" /><span>{{ t.label }}</span><i v-if="t.arrow" class="arr split" /></button>
          </div>
        </div>
        <div class="bar last">
          <div class="strip">
            <i class="grip" />
            <template v-for="(t, i) in drawTools" :key="i">
              <i v-if="t.sep" class="sep" />
              <button v-else class="tool"><svg viewBox="0 0 16 16" v-html="icons[t.icon!]" /><span>{{ t.label }}</span><i v-if="t.arrow" class="arr" :class="t.arrow" /></button>
            </template>
          </div>
          <div class="strip empty"><i class="grip" /></div>
        </div>

        <div class="canvas">
          <svg viewBox="231 166 1135 509" preserveAspectRatio="xMinYMin slice">
            <g shape-rendering="crispEdges" fill="none">
              <text v-for="d in dims" :key="d.t" :transform="`translate(${d.x} ${d.y}) rotate(-90)`" y="5" class="dimtext">{{ d.t }}</text>
              <text v-for="b in bubbles" :key="'t' + b.x + b.y" :x="b.x" :y="b.y + 5" class="axistext">{{ b.t }}</text>
              <line v-for="(l, i) in dark" :key="'d' + i" :x1="l[0]" :y1="l[1]" :x2="l[2]" :y2="l[3]" stroke="#800000" />
              <line v-for="(l, i) in red" :key="'r' + i" :x1="l[0]" :y1="l[1]" :x2="l[2]" :y2="l[3]" stroke="#ff0000" />
              <line v-for="(l, i) in green" :key="'g' + i" :x1="l[0]" :y1="l[1]" :x2="l[2]" :y2="l[3]" stroke="#008000" />
              <line v-for="(l, i) in mixed" :key="'m' + i" :x1="l[0]" :y1="l[1]" :x2="l[2]" :y2="l[3]" stroke="#008000" stroke-dasharray="15 2 2 2 2 2" />
              <circle v-for="b in bubbles" :key="'c' + b.x + b.y" :cx="b.x" :cy="b.y" r="12.500" stroke="#008000" />
              <path d="M508 166L530 318M371 307L546 319" stroke="#fff" stroke-width="2" />
              <path d="M523 313l13 9" stroke="#fff" />
              <polygon v-for="(f, i) in faces" :key="'f' + i" :points="f.p" :fill="f.c" />
              <g stroke="#fff" stroke-opacity=".45">
                <circle cx="798" cy="420" r="226" />
                <circle v-for="(h, i) in handles" :key="'h' + i" :cx="h[0]" :cy="h[1]" r="14" />
              </g>
              <path d="M321 612l9 9M330 612l-9 9" stroke="#7a0f0f" />
              <path d="M300 592l-4 4" stroke="#00a000" />
              <path d="M283 584.500h9l-8 9h10" stroke="#0078ff" />
              <path d="M286 624L282 600" stroke="#00ff00" stroke-width="3" />
              <path d="M282 589l-4 8 7-1z" fill="#00ff00" />
              <path d="M286 624L293 598" stroke="#0078ff" stroke-width="4" />
              <path d="M295 590l-6 9 8 3z" fill="#0078ff" />
              <path d="M286 625L323 627" stroke="#ff0000" stroke-width="4" />
              <path d="M323 623l11 5-11 4z" fill="#ff0000" />
            </g>
          </svg>
        </div>

        <div class="bar bottom">
          <div class="strip">
            <i class="grip" />
            <button v-for="t in modeTools" :key="t.label" class="tool" :class="{ on: t.on }"><svg viewBox="0 0 16 16" v-html="icons[t.icon!]" /><span>{{ t.label }}</span></button>
          </div>
          <div class="strip snaps">
            <i class="grip" />
            <button v-for="t in snapTools" :key="t.label" class="tool" :class="{ on: t.on }"><svg viewBox="0 0 16 16" v-html="icons[t.icon!]" /><span>{{ t.label }}</span></button>
          </div>
          <div class="strip offsets">
            <i class="grip" />
            <label class="combo short"><select aria-label="偏移方式"><option>不偏移</option></select><span class="drop"><i class="arr" /></span></label>
            <i class="sep wide" />
            <label class="num" for="ox">X=</label>
            <span class="spin"><input id="ox" v-model="offX"><span class="ud"><i class="up" /><i class="arr" /></span></span>
            <span class="num unit">mm</span>
            <label class="num" for="oy">Y=</label>
            <span class="spin"><input id="oy" v-model="offY"><span class="ud"><i class="up" /><i class="arr" /></span></span>
            <span class="num unit">mm</span>
            <i class="sep tight" />
            <label class="rot"><input v-model="rotated" type="checkbox"><span>旋转</span></label>
            <span class="spin big"><input v-model="angle" aria-label="旋转角度"><span class="ud"><i class="up" /><i class="arr" /></span></span>
            <span class="num deg">°</span>
          </div>
        </div>
      </section>
    </main>

    <footer class="status">
      <span class="cell c1"><span class="mono">X=309893 Y=13068</span></span>
      <span class="cell c2">层高<span class="mono">:2.15m</span></span>
      <span class="cell c3">底标高<span class="mono">:-2.2m</span></span>
      <span class="cell c4"><span class="mono">0</span></span>
      <span class="cell grow" />
      <span class="cell c5"><span class="mono">298.1 FPS</span></span>
    </footer>

    <div class="taskbar">
      <button class="start" aria-label="开始"><svg viewBox="0 0 16 16"><path d="M0 2.500l7-1v6H0zM8 1.300L16 0v7.500H8zM0 8.500h7v6l-7-1zM8 8.500h8V16l-8-1.300z" fill="#fff" /></svg></button>
      <label class="search">
        <svg viewBox="0 0 22 22"><circle cx="11" cy="11" r="9" fill="none" stroke="#f2f2f2" stroke-width="3" /></svg>
        <input placeholder="在这里输入你要搜索的内容" aria-label="搜索">
        <svg class="mic" viewBox="0 0 16 18"><rect x="5.500" y="1" width="5" height="11" rx="1" fill="none" stroke="#aaa" /><path d="M2.500 8v6h11V8M8 14v3M5 16.500h6" fill="none" stroke="#aaa" /></svg>
      </label>
      <div class="apps">
        <button class="w1" aria-label="任务视图"><svg viewBox="0 0 24 24"><path d="M6.500 5.500h11v13h-11zM4.500 7.500h-2v10h2M19.500 7.500h2v10h-2" fill="none" stroke="#fff" stroke-width="1.300" /></svg></button>
        <button class="w2" aria-label="风车"><svg viewBox="0 0 24 24"><rect x="1" y="2" width="10" height="10" rx="4" fill="#e8e8e8" /><rect x="12" y="1" width="10" height="10" rx="4" fill="#e8e8e8" /><rect x="2" y="12" width="10" height="10" rx="4" fill="#e8e8e8" /><rect x="13" y="12" width="10" height="10" rx="4" fill="#e8e8e8" /><circle cx="12" cy="12" r="3" fill="#e8e8e8" /><path d="M12 12q-6 0-8-4M12 12q0-6 4-8M12 12q6 0 8 4M12 12q0 6-4 8" stroke="#01080a" stroke-width="1.200" fill="none" /></svg></button>
        <button class="w2" aria-label="浏览器"><svg viewBox="0 0 24 24"><path d="M19 15.500A7.500 7.500 0 1 1 19.500 12H8" fill="none" stroke="#e8e8e8" stroke-width="4" /><path d="M3 22Q-1 15 9 6T22 3" fill="none" stroke="#e8e8e8" stroke-width="1.500" /></svg></button>
        <button class="w2" aria-label="漩涡"><svg viewBox="0 0 24 24"><path d="M21 5h-7q-10-2-11 7 1 9 9 9t9-8q-1-6-8-5-6 1-5 5 1 4 5 4t4-4h-4" fill="none" stroke="#ddd" stroke-width="1.300" /><path d="M21 5q-14-1-15 7t8 6" fill="none" stroke="#ddd" stroke-width="1.200" /></svg></button>
        <button class="w2" aria-label="Edge"><svg viewBox="0 0 24 24"><path d="M2 12Q3 2 12 2q10 0 10 9v3H8q1 4 6 4 4 0 7-2v5q-4 2-8 2-9-1-9-9 1-5 6-7-2 2-2 4h8q0-4-4-4-6 0-10 5z" fill="#0a7ad8" /></svg></button>
        <button class="w3" aria-label="IE"><svg viewBox="0 0 24 24"><path d="M19.500 15.500A7.500 7.500 0 1 1 20 12H8" fill="none" stroke="#3fb0ee" stroke-width="4.500" /><path d="M2 22Q-1 15 9 7T22 3q1 2-1 5" fill="none" stroke="#f5c52b" stroke-width="2" /></svg></button>
        <button class="w3" aria-label="资源管理器"><svg viewBox="0 0 24 24"><path d="M2 3h7l2 2h11v15H2z" fill="#f5d36c" /><path d="M2 8h20v12H2z" fill="#fbe59a" /><path d="M6 22v-9h12v9h-3v-5H9v5z" fill="#2f9bd8" /></svg></button>
        <button class="w3 run" aria-label="广联达"><svg viewBox="0 0 24 24"><path d="M22 2Q8-1 3 8q-3 9 5 14 9 2 13-6 1-5-3-7-5-1-7 3h5q-1 4-5 3-4-2-2-7 4-6 13-6z" fill="#1a8fe0" /></svg></button>
        <button class="w3 run" aria-label="安全浏览器"><svg viewBox="0 0 24 24"><circle cx="12" cy="12" r="11" fill="#5cc33c" /><path d="M18 15a6.500 6.500 0 1 1 .5-3H7" fill="none" stroke="#fff" stroke-width="3" /></svg></button>
        <button class="w3 run" aria-label="记事"><svg viewBox="0 0 24 24"><rect x="0" y="0" width="24" height="24" rx="3" fill="#f09a20" /><rect x="3" y="4" width="17" height="17" fill="#fff5dc" /><path d="M5 8h8M5 12h6M5 16h7" stroke="#c57a18" stroke-width="1.500" /><path d="M11 18l2-6 8-9 2 2-8 10z" fill="#444" /></svg></button>
        <button class="w3 run" aria-label="查阅"><svg viewBox="0 0 24 24"><rect width="24" height="24" rx="4" fill="#1f80d0" /><path d="M3 6h9v13H3zM12 6h9v13h-9z" fill="#e5f2fc" stroke="#7fb5e0" /><circle cx="14" cy="9" r="5" fill="#d2eaff" stroke="#56789c" stroke-width="1.500" /><path d="M17 13l5 6" stroke="#e09b3d" stroke-width="3" /></svg></button>
        <button class="w3 run now" aria-label="钢筋算量"><svg viewBox="0 0 16 16" v-html="icons.app" /></button>
      </div>
      <span class="links">链接</span>
      <span class="two cpu"><span>37%</span><span>CPU使用</span></span>
      <div class="tray">
        <svg viewBox="0 0 16 16"><path d="M2 11l6-6 6 6" fill="none" stroke="#fff" stroke-width="1.500" /></svg>
        <svg viewBox="0 0 16 16"><path d="M5.500 5.500h9v7h-9z" fill="none" stroke="#fff" /><path d="M7 7h6v4H7zM15 7h1v4h-1z" fill="#fff" /><path d="M0 4h5v3q-1 2-3 2-2 0-2-2zM1 1v3M4 1v3M2 9v3h3" stroke="#fff" fill="none" /></svg>
        <svg viewBox="0 0 16 16"><path d="M2 14Q2 3 14 2M5 14q0-8 9-8M8 14q0-5 6-5" fill="none" stroke="#bbb" stroke-width="1.300" /><circle cx="12" cy="13" r="2" fill="#fff" /></svg>
        <svg viewBox="0 0 16 16"><path d="M1 6h3l4-4v12l-4-4H1z" fill="none" stroke="#fff" /><path d="M10 6q2 2 0 4M12 4q3 4 0 8M14 2q4 6 0 12" fill="none" stroke="#ccc" /></svg>
        <svg class="kbd" viewBox="0 0 22 14"><rect x=".5" y=".5" width="21" height="13" fill="none" stroke="#fff" /><path d="M3 3.500h16M3 6.500h16" stroke="#fff" stroke-width="1.500" stroke-dasharray="1 1" /><path d="M6 10.500h10" stroke="#fff" /></svg>
        <span class="lang">A</span>
        <svg viewBox="0 0 16 16"><path d="M1 3l12-2 2 12-12 2z" fill="#f04e23" /><text x="8" y="13" text-anchor="middle" font-size="13" font-weight="700" font-family="Liberation Sans" fill="#fff">S</text></svg>
      </div>
      <span class="two clock"><span>11:29</span><span>2018/4/22</span></span>
      <div class="notice">
        <svg viewBox="0 0 26 26"><path d="M2 3h16v13h-9l-4 4v-4H2z" fill="#fff" /><path d="M4 7h12M4 10h12M4 13h8" stroke="#111" /><circle cx="17" cy="18" r="7.500" fill="#222" stroke="#888" /><text x="17" y="22" text-anchor="middle" font-size="11" font-family="Open Sans" fill="#fff">1</text></svg>
      </div>
    </div>
  </div>
</template>

<style>
html, body { margin: 0; height: 100%; overflow: hidden; }
</style>

<style scoped>
.desk { display: flex; flex-direction: column; height: 100vh; background: #f0f0f0; color: #000; font: 12px/16px "Open Sans", "Noto Sans CJK SC", sans-serif; white-space: nowrap; }
.desk * { box-sizing: border-box; }
button { border: 0; background: none; padding: 0; margin: 0; font: inherit; color: inherit; }
svg { display: block; flex: none; }
h1, h2 { margin: 0; font: inherit; }
i { display: block; flex: none; font-style: normal; }

.title { position: relative; display: flex; align-items: center; height: 23px; flex: none; background: #fff; padding-left: 2px; }
.title h1 { font-family: Inter, "Noto Sans CJK SC", sans-serif; }
.logo { width: 16px; height: 16px; margin-right: 5px; }
.winbtns { margin-left: auto; display: flex; }
.winbtns button { width: 46px; height: 21px; display: flex; align-items: center; justify-content: center; }
.winbtns svg { width: 12px; height: 12px; }
.ime { position: absolute; left: 720px; top: 4px; width: 188px; height: 23px; background: #fff; border: 1px solid #b9c9dd; display: flex; align-items: center; justify-content: space-between; padding: 0 3px 0 13px; z-index: 2; }
.ime svg { width: 16px; height: 16px; }
.ime .sogou { position: absolute; left: -20px; top: -5px; width: 28px; height: 28px; }
.ball { position: absolute; left: 1042px; top: -27px; width: 46px; height: 46px; border-radius: 50%; border: 2px solid #b8b8b8; background: #3fc55a; box-shadow: 0 2px 4px #999, inset 0 0 0 1px #2a9a52; color: #fff; font-weight: 700; text-align: center; line-height: 64px; z-index: 2; }

.menurow { display: flex; align-items: center; height: 29px; flex: none; }
.menus { display: flex; justify-content: space-between; flex: none; width: 779px; padding-left: 7px; }
.strip { display: flex; align-items: center; height: 26px; border-radius: 2px; background: linear-gradient(#fbfbfb, #f2f2f2); padding-right: 1px; }
.strip.plain { background: none; margin-left: 5px; }
.tip { margin-left: auto; width: 187px; height: 27px; line-height: 27px; text-align: center; color: #0c6b6b; background: linear-gradient(#f9f9f9, #f3f3f3); text-decoration: none; }
.account { width: 239px; margin-left: 3px; }
.beans { margin-left: 5px; }
.bell { width: 16px; height: 16px; margin-left: 8px; }
.more { margin-left: auto; margin-right: 4px; font-size: 14px; line-height: 14px; font-weight: 600; height: 26px; }

.toprow { display: flex; height: 32px; align-items: center; flex: none; }
.toprow .strip { height: 28px; }
.files { width: 149px; padding-left: 2px; }
.calc { width: 549px; margin-left: 3px; padding-left: 2px; }
.files .more, .calc .more { margin-right: 1px; }
.view { flex: 1; margin-left: 4px; }
.tool { display: flex; align-items: center; height: 23px; padding: 0 4px 0 3px; flex: none; }
.tool svg { width: 16px; height: 16px; }
.tool span { margin-left: 4px; }
.tool.off { color: #8a8a8a; }
.tool.on { background: #dce9f5; box-shadow: inset 0 0 0 1px #0078d7; }
.tool.white { background: #fff; }
.arr { width: 7px; height: 4px; background: #000; clip-path: polygon(0 0, 100% 0, 50% 100%); }
.arr.split { margin: 0 -1px 0 6px; }
.arr.menu { margin: 0 -1px 0 2px; }
.sep { width: 1px; height: 15px; background: #bdbdbd; margin: 0 2px 0 3px; }
.sep.tall { height: 26px; background: #999; }
.grip { width: 2px; height: 15px; margin: 0 2px 0 3px; background: repeating-linear-gradient(#b4b4b4 0 2px, transparent 2px 4px); }

.work { flex: 1; min-height: 0; display: flex; }
.nav { width: 227px; flex: none; display: flex; flex-direction: column; margin-right: 4px; padding-bottom: 1px; }
.navhead { display: flex; align-items: center; height: 16px; background: #0054e3; color: #fff; padding-right: 4px; }
.navhead h2 { margin-right: auto; font-size: 13px; line-height: 15px; }
.navhead svg { width: 12px; height: 12px; margin-left: 6px; }
.section { height: 22px; flex: none; border: 1px solid #a0a0a0; border-bottom-width: 0; padding-top: 2px; text-align: center; background: #f0f0f0; box-shadow: inset 1px 1px 0 #fff; }
.section:last-child { border-bottom-width: 1px; height: 23px; }
.expanders { height: 28px; flex: none; border: 1px solid #a0a0a0; border-bottom: 0; background: linear-gradient(#fdfdfd, #eee); padding: 4px 0 0 3px; }
.expanders svg { width: 42px; height: 18px; }
.treebox { flex: 1; min-height: 0; margin: 0 2px 0 2px; border: 1px solid #828790; background: #fff; display: flex; padding: 1px; overflow: hidden; }
.tree { list-style: none; margin: 0; padding: 1px 0 0; flex: 1; overflow: hidden; }
.tree li { display: flex; height: 16px; align-items: center; }
.guide { width: 22px; height: 16px; }
.guide.deep { width: 42px; }
.leaf { display: flex; align-items: center; height: 16px; padding-right: 4px; }
.leaf.sel { background: #d9d9d9; }
.nodeicon { width: 16px; height: 16px; margin-right: 4px; }
.mono { font: 10px/16px "Liberation Mono", monospace; }
.scroll { width: 17px; background: #f0f0f0; display: flex; flex-direction: column; }
.scroll button { height: 17px; display: flex; align-items: center; justify-content: center; }
.scroll svg { width: 10px; height: 10px; }
.track { flex: 1; padding-top: 62px; display: flex; }
.thumb { width: 15px; height: 69%; margin-left: 1px; background: #cdcdcd; }

.stage { flex: 1; min-width: 0; display: flex; flex-direction: column; }
.bar { display: flex; height: 27px; align-items: center; flex: none; padding-left: 1px; }
.bar.last { height: 28px; padding-top: 1px; }
.apart { margin-left: 74px; }
.empty { width: 32px; margin-left: 2px; }
.combos { display: flex; gap: 2px; padding: 0 2px 0 1px; }
.combo { display: flex; width: 70px; height: 22px; background: #fff; }
.combo.short { width: 57px; }
.combo select { flex: 1; min-width: 0; appearance: none; border: 0; background: none; font: inherit; color: inherit; padding: 0 0 0 2px; }
.drop { width: 11px; background: #f4f4f4; display: flex; align-items: center; justify-content: center; }
.canvas { flex: 1; min-height: 0; background: #000; margin-right: 1px; overflow: hidden; }
.canvas svg { width: 100%; height: 100%; }
.dimtext, .axistext { font: 14px "Liberation Sans", sans-serif; fill: #e0e0e0; text-anchor: middle; }
.bottom { height: 31px; }
.snaps { margin-left: 3px; }
.offsets { margin-left: 2px; color: #7b7b7b; }
.offsets .combo { color: #000; }
.sep.wide { margin-left: 5px; }
.num.unit { margin: 0 5px 0 1px; }
.spin { display: flex; width: 58px; height: 23px; margin-left: 4px; border: 1px solid #7a7a7a; background: #f0f0f0; }
.spin.big { width: 68px; }
.spin input { flex: 1; min-width: 0; border: 0; background: none; padding: 0; font: inherit; color: #6d6d6d; text-align: right; }
.ud { display: flex; flex-direction: column; justify-content: space-between; align-items: center; width: 18px; padding: 4px 3px 4px 0; flex: none; }
.spin .arr, .up { width: 5px; height: 3px; background: #606060; margin-left: 5px; }
.up { clip-path: polygon(50% 0, 100% 100%, 0 100%); }
.sep.tight { margin-left: 0; }
.rot { display: flex; align-items: center; gap: 9px; color: #000; }
.rot input { appearance: none; width: 11px; height: 11px; margin: 0 0 0 1px; border: 1px solid #aaa; background: #f6f6f6; }
.deg { margin-left: 1px; }

.status { display: flex; height: 22px; flex: none; padding-top: 2px; gap: 3px; background: #f8f8f8; }
.cell { height: 20px; border: 1px solid #d2d2d2; background: linear-gradient(#fdfdfd, #f2f2f2); padding-left: 2px; line-height: 17px; }
.c1 { width: 148px; padding-left: 1px; }
.c2 { width: 77px; }
.c3 { width: 97px; }
.c4 { width: 47px; }
.c5 { width: 70px; }
.grow { flex: 1; }

.taskbar { display: flex; height: 40px; flex: none; background: #01090b; color: #fff; align-items: center; }
.start { width: 48px; height: 40px; display: flex; align-items: center; justify-content: center; background: #000; }
.start svg { width: 16px; height: 16px; }
.search { width: 344px; height: 40px; background: #333; display: flex; align-items: center; padding: 0 12px 0 8px; }
.search svg { width: 24px; height: 24px; }
.search .mic { width: 16px; height: 18px; }
.search input { flex: 1; min-width: 0; border: 0; background: none; padding: 0; margin-left: 4px; font: 14px "Open Sans", "Noto Sans CJK SC", sans-serif; color: #fff; }
.search input::placeholder { color: #9b9b9b; opacity: 1; }
.apps { display: flex; height: 40px; }
.apps button { display: flex; align-items: center; justify-content: center; height: 40px; }
.apps svg { width: 24px; height: 24px; }
.w1 { width: 48px; }
.w2 { width: 51px; }
.w3 { width: 42px; }
.apps .run { box-shadow: inset 0 -3px 0 #76b9ed; border-left: 4px solid #01090b; border-right: 4px solid #01090b; }
.apps .now { background: #343c3e; border-color: #343c3e; }
.links { margin-left: 11px; }
.two { display: flex; flex-direction: column; align-items: center; line-height: 17px; }
.cpu { margin-left: 18px; width: 50px; }
.tray { display: flex; align-items: center; gap: 7px; margin-left: 17px; }
.tray svg { width: 17px; height: 17px; }
.tray .kbd { width: 22px; height: 14px; }
.lang { font-size: 18px; padding: 0 4px 0 3px; }
.clock { margin-left: auto; width: 62px; }
.notice { margin-left: 15px; width: 42px; height: 40px; border-right: 1px solid #555; display: flex; align-items: center; margin-right: 2px; }
.notice svg { width: 26px; height: 26px; }
</style>
